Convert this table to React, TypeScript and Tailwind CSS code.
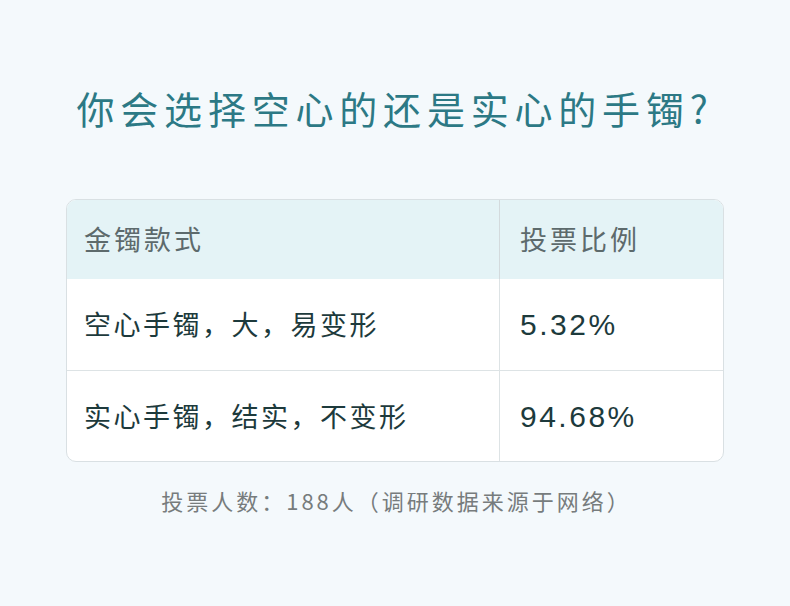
const cjk = { fontFamily: '"Noto Sans CJK SC", "Noto Sans", sans-serif' };
const num = { fontFamily: '"Liberation Sans", Arial, sans-serif' };

const rows = [
  { style: '空心手镯，大，易变形', ratio: '5.32%' },
  { style: '实心手镯，结实，不变形', ratio: '94.68%' },
];

export default function App() {
  return (
    <div className="w-[790px] h-[606px] bg-[#f4f9fc] flex flex-col items-center" style={cjk}>
      <h1 className="mt-[81px] text-[38px] leading-[54px] text-[#2c7985] tracking-[5.8px]">
        你会选择空心的还是实心的手镯?
      </h1>

      <div className="mt-[64px] w-[658px] rounded-[10px] border border-[#d9e0e3] overflow-hidden bg-white">
        <div className="grid grid-cols-[433px_1fr] h-[79px] bg-[#e4f3f6] text-[#5d6a6c] text-[27px] tracking-[3px]">
          <div className="pl-[17px] flex items-center border-r border-[#d3dadd]">金镯款式</div>
          <div className="pl-[20px] flex items-center">投票比例</div>
        </div>
        {rows.map((r, i) => (
          <div
            key={r.ratio}
            className={`grid grid-cols-[433px_1fr] h-[91px] text-[#1d3a3c] ${i > 0 ? 'border-t border-[#dde3e5]' : ''}`}
          >
            <div className="pl-[17px] flex items-center border-r border-[#dde3e5] text-[27px] tracking-[2.5px]">
              {r.style}
            </div>
            <div className="pl-[20px] flex items-center text-[30px] tracking-[2.5px]" style={num}>
              {r.ratio}
            </div>
          </div>
        ))}
      </div>

      <p className="mt-[22px] pl-[3px] text-[22px] tracking-[3px] text-[#777c7d]">
        投票人数：188人（调研数据来源于网络）
      </p>
    </div>
  );
}
